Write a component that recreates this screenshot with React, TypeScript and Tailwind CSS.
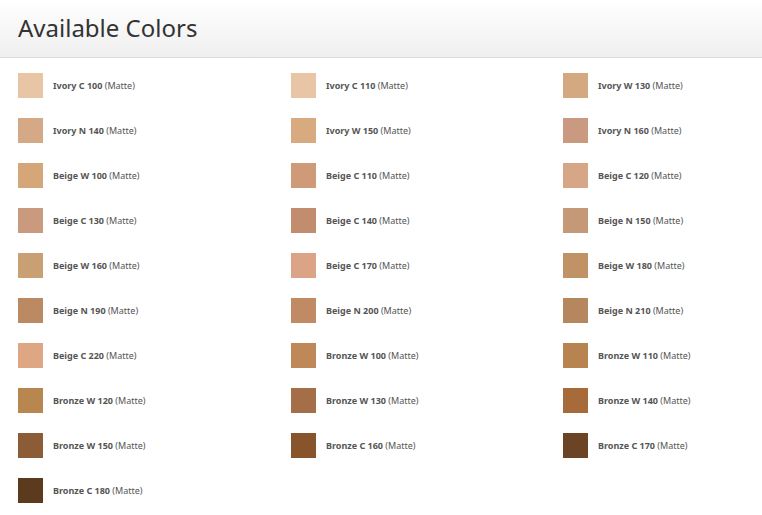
const colors: [string, string][] = [
  ['Ivory C 100', '#e8c5a5'], ['Ivory C 110', '#e8c5a5'], ['Ivory W 130', '#d4a880'],
  ['Ivory N 140', '#d5a886'], ['Ivory W 150', '#d8aa80'], ['Ivory N 160', '#c99a80'],
  ['Beige W 100', '#d4a678'], ['Beige C 110', '#cf9a78'], ['Beige C 120', '#d6a686'],
  ['Beige C 130', '#c99a7e'], ['Beige C 140', '#c28d6e'], ['Beige N 150', '#c59878'],
  ['Beige W 160', '#c9a074'], ['Beige C 170', '#dba486'], ['Beige W 180', '#c09266'],
  ['Beige N 190', '#bb8a62'], ['Beige N 200', '#bf8a64'], ['Beige N 210', '#b6865f'],
  ['Beige C 220', '#dea682'], ['Bronze W 100', '#bf8858'], ['Bronze W 110', '#b7834f'],
  ['Bronze W 120', '#b8864f'], ['Bronze W 130', '#a46f48'], ['Bronze W 140', '#a96a39'],
  ['Bronze W 150', '#8b5c36'], ['Bronze C 160', '#87542c'], ['Bronze C 170', '#6b4425'],
  ['Bronze C 180', '#5c3a1e'],
]

export default function App() {
  return (
    <div className="h-[515px] w-[762px] overflow-hidden bg-white font-['Liberation_Sans',Arial,sans-serif]">
      <div className="h-[58px] border-b border-[#dcdcdc] bg-gradient-to-b from-white to-[#efefef] pl-[18px] pt-[13px]">
        <h1 className="text-[24px] leading-[30px] text-[#333]">Available Colors</h1>
      </div>
      <div className="grid grid-cols-[273px_272px_1fr] gap-y-5 pl-[18px] pt-[15px]">
        {colors.map(([name, c]) => (
          <div key={name} className="flex h-[25px] items-center">
            <div className="h-[25px] w-[25px]" style={{ backgroundColor: c }} />
            <span className="ml-[10px] text-[9px] text-[#555]">
              <b>{name}</b> (Matte)
            </span>
          </div>
        ))}
      </div>
    </div>
  )
}
